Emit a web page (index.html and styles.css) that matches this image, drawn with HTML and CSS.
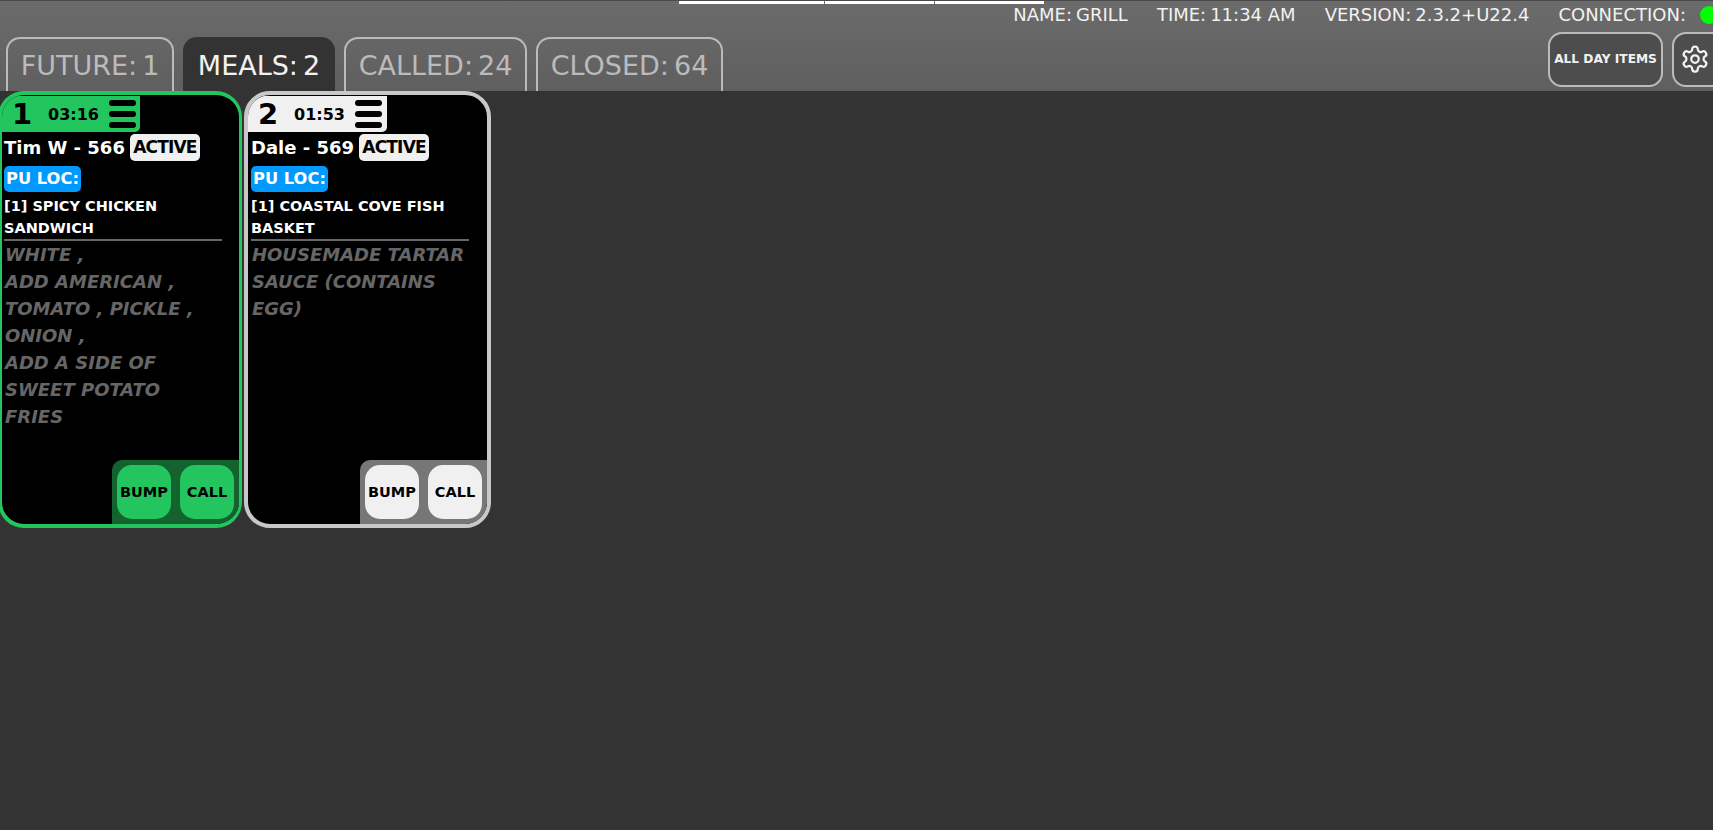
FILE: index.html
```html
<!DOCTYPE html>
<html lang="en">

<head>
    <meta charset="UTF-8">
    <title>Kitchen Display</title>
    <link rel="stylesheet" href="styles.css">
</head>

<body>
    <div class="top-strip">
        <span class="strip-a"></span>
        <span class="strip-b"></span>
        <span class="strip-c"></span>
    </div>

    <header class="topbar">
        <div class="status-row">
            <span class="status-item"><span>NAME:</span><span>GRILL</span></span>
            <span class="status-item"><span>TIME:</span><span>11:34 AM</span></span>
            <span class="status-item"><span>VERSION:</span><span>2.3.2+U22.4</span></span>
            <span class="status-item conn"><span>CONNECTION:</span><span class="dot"></span></span>
        </div>
        <div class="nav-row">
            <div class="tabs">
                <div class="tab tab-future"><span>FUTURE:</span><span>1</span></div>
                <div class="tab tab-meals active"><span>MEALS:</span><span>2</span></div>
                <div class="tab tab-called"><span>CALLED:</span><span>24</span></div>
                <div class="tab tab-closed"><span>CLOSED:</span><span>64</span></div>
            </div>
            <div class="actions">
                <button class="btn-allday">ALL DAY ITEMS</button>
                <button class="btn-gear">
                    <svg viewBox="0 0 24 24" width="30" height="30" fill="none" stroke="#f2f2f2" stroke-width="1.8" stroke-linecap="round" stroke-linejoin="round">
                        <path d="M12.22 2h-.44a2 2 0 0 0-2 2v.18a2 2 0 0 1-1 1.73l-.43.25a2 2 0 0 1-2 0l-.15-.08a2 2 0 0 0-2.73.73l-.22.38a2 2 0 0 0 .73 2.73l.15.1a2 2 0 0 1 1 1.72v.51a2 2 0 0 1-1 1.74l-.15.09a2 2 0 0 0-.73 2.73l.22.38a2 2 0 0 0 2.73.73l.15-.08a2 2 0 0 1 2 0l.43.25a2 2 0 0 1 1 1.73V20a2 2 0 0 0 2 2h.44a2 2 0 0 0 2-2v-.18a2 2 0 0 1 1-1.73l.43-.25a2 2 0 0 1 2 0l.15.08a2 2 0 0 0 2.73-.73l.22-.39a2 2 0 0 0-.73-2.73l-.15-.08a2 2 0 0 1-1-1.74v-.5a2 2 0 0 1 1-1.74l.15-.09a2 2 0 0 0 .73-2.73l-.22-.38a2 2 0 0 0-2.73-.73l-.15.08a2 2 0 0 1-2 0l-.43-.25a2 2 0 0 1-1-1.73V4a2 2 0 0 0-2-2z"></path>
                        <circle cx="12" cy="12" r="3"></circle>
                    </svg>
                </button>
            </div>
        </div>
    </header>

    <main class="tickets">
        <!-- Ticket 1 -->
        <div class="ticket ticket-green">
            <div class="ticket-head">
                <span class="ticket-num">1</span>
                <span class="ticket-time">03:16</span>
                <span class="burger"><i></i><i></i><i></i></span>
            </div>
            <div class="ticket-name">
                <span>Tim W - 566</span>
                <span class="badge">ACTIVE</span>
            </div>
            <div class="pu-loc">PU LOC:</div>
            <div class="item">[1] SPICY CHICKEN SANDWICH</div>
            <div class="mods">
                <p>WHITE ,</p>
                <p>ADD AMERICAN ,</p>
                <p>TOMATO , PICKLE ,</p>
                <p>ONION ,</p>
                <p>ADD A SIDE OF SWEET POTATO FRIES</p>
            </div>
            <div class="ticket-btns">
                <button class="btn-bump">BUMP</button>
                <button class="btn-call">CALL</button>
            </div>
        </div>

        <!-- Ticket 2 -->
        <div class="ticket ticket-white">
            <div class="ticket-head">
                <span class="ticket-num">2</span>
                <span class="ticket-time">01:53</span>
                <span class="burger"><i></i><i></i><i></i></span>
            </div>
            <div class="ticket-name">
                <span>Dale - 569</span>
                <span class="badge">ACTIVE</span>
            </div>
            <div class="pu-loc">PU LOC:</div>
            <div class="item">[1] COASTAL COVE FISH BASKET</div>
            <div class="mods">
                <p>HOUSEMADE TARTAR SAUCE (CONTAINS EGG)</p>
            </div>
            <div class="ticket-btns">
                <button class="btn-bump">BUMP</button>
                <button class="btn-call">CALL</button>
            </div>
        </div>
    </main>
</body>

</html>
```

FILE: styles.css
```css
* {
    box-sizing: border-box;
}

html,
body {
    height: 100%;
}

body {
    margin: 0;
    background-color: #333333;
    font-family: "DejaVu Sans", sans-serif;
    overflow: hidden;
}

.top-strip {
    position: absolute;
    top: 1px;
    left: 679px;
    display: flex;
    gap: 1px;
    height: 3px;
}

.top-strip span {
    background-color: #ffffff;
    height: 3px;
}

.strip-a {
    width: 145px;
}

.strip-b {
    width: 109px;
}

.strip-c {
    width: 109px;
}

.topbar {
    height: 91px;
    background: linear-gradient(to bottom, #6b6b6b, #5f5f5f);
    border-top: 1px solid #4a4a4a;
    overflow: hidden;
}

.status-row {
    display: flex;
    justify-content: flex-end;
    align-items: center;
    height: 27px;
    gap: 29px;
    color: #f2f2f2;
    font-size: 18px;
    margin-right: -5px;
}

.status-item {
    display: flex;
    align-items: center;
    gap: 4px;
}

.conn {
    gap: 14px;
}

.dot {
    width: 18px;
    height: 18px;
    border-radius: 50%;
    background-color: #00ff00;
}

.nav-row {
    display: flex;
    justify-content: space-between;
    align-items: flex-start;
    margin-top: 4px;
    padding-left: 6px;
}

.tabs {
    display: flex;
    gap: 9px;
    margin-top: 5px;
}

.tab {
    display: flex;
    justify-content: center;
    gap: 5px;
    height: 54px;
    padding-top: 10px;
    border: 2px solid #bbbbbb;
    border-bottom: none;
    border-radius: 14px 14px 0 0;
    color: #bbbbbb;
    font-size: 27px;
    line-height: 33px;
}

.tab-future {
    width: 168px;
}

.tab-meals {
    width: 152px;
}

.tab-called {
    width: 183px;
}

.tab-closed {
    width: 187px;
}

.tab.active {
    background-color: #333333;
    border-color: #333333;
    color: #f2f2f2;
}

.actions {
    display: flex;
    gap: 9px;
    margin-right: -13px;
}

.btn-allday,
.btn-gear {
    height: 55px;
    padding: 0 0 2px;
    background-color: #4d4d4d;
    border: 2px solid #bbbbbb;
    border-radius: 14px;
    color: #f2f2f2;
    font-family: inherit;
    font-weight: bold;
}

.btn-allday {
    width: 115px;
    font-size: 12.2px;
}

.btn-gear {
    display: flex;
    align-items: center;
    justify-content: center;
    width: 54px;
    padding-right: 8px;
}

.tickets {
    display: flex;
    gap: 2px;
    align-items: flex-start;
    margin-left: -2px;
}

.ticket {
    --inset: 2px;
    display: flex;
    flex-direction: column;
    width: 244px;
    height: 437px;
    background-color: #000000;
    border: 4px solid #22c55e;
    border-right-width: 3px;
    border-radius: 26px;
    overflow: hidden;
    color: #ffffff;
}

.ticket-white {
    --inset: 3px;
    width: 247px;
    border-color: #c8c8c8;
    border-right-width: 4px;
}

.ticket-head {
    display: flex;
    align-items: center;
    width: 138px;
    height: 36px;
    flex-shrink: 0;
    margin-top: 1px;
    padding-left: 10px;
    background-color: #22c55e;
    border-radius: 0 0 5px 0;
    color: #000000;
}

.ticket-white .ticket-head {
    width: 139px;
    background-color: #f0f0f0;
}

.ticket-num {
    width: 36px;
    font-size: 29px;
    font-weight: bold;
    line-height: 36px;
}

.ticket-time {
    width: 61px;
    font-size: 16px;
    font-weight: bold;
}

.burger {
    display: flex;
    flex-direction: column;
    gap: 5px;
    width: 27px;
}

.burger i {
    display: block;
    height: 6px;
    background-color: #000000;
    border-radius: 3px;
}

.ticket-name {
    display: flex;
    align-items: center;
    gap: 5px;
    margin-top: 2px;
    margin-left: var(--inset);
    font-size: 18px;
    font-weight: bold;
}

.badge {
    width: 70px;
    height: 27px;
    line-height: 26px;
    background-color: #f0f0f0;
    border-radius: 5px;
    color: #000000;
    font-size: 17px;
    letter-spacing: -0.8px;
    text-align: center;
}

.pu-loc {
    align-self: flex-start;
    height: 26px;
    margin-top: 5px;
    margin-left: var(--inset);
    padding: 0 2px;
    background-color: #0099ff;
    border-radius: 5px;
    font-size: 16.3px;
    font-weight: bold;
    line-height: 25px;
}

.item {
    width: 218px;
    margin-top: 3px;
    margin-left: var(--inset);
    border-bottom: 2px solid #666666;
    font-size: 14.5px;
    font-weight: bold;
    line-height: 22px;
}

.mods {
    flex: 1;
    width: 216px;
    margin-left: calc(var(--inset) + 1px);
    color: #666666;
    font-size: 18px;
    font-style: italic;
    font-weight: bold;
    line-height: 27px;
}

.mods p {
    margin: 0;
}

.ticket-btns {
    display: flex;
    align-self: flex-end;
    gap: 9px;
    width: 127px;
    height: 64px;
    padding: 5px;
    flex-shrink: 0;
    background-color: #14632f;
    border-radius: 10px 0 0 0;
}

.ticket-white .ticket-btns {
    background-color: #777777;
}

.btn-bump,
.btn-call {
    width: 54px;
    height: 54px;
    padding: 0;
    border: none;
    border-radius: 15px;
    background-color: #22c55e;
    color: #000000;
    font-family: inherit;
    font-size: 14.5px;
    font-weight: bold;
}

.ticket-white .btn-bump,
.ticket-white .btn-call {
    background-color: #f0f0f0;
}
```
